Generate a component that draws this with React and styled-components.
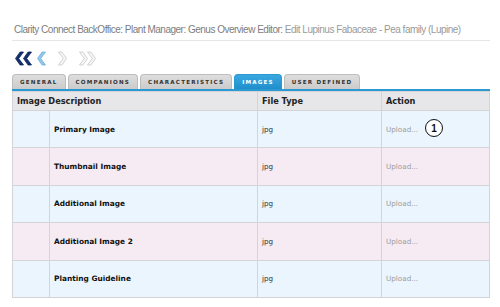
import React from "react";
import styled, { createGlobalStyle } from "styled-components";

const GlobalStyle = createGlobalStyle`
  body {
    margin: 0;
    background: #fff;
    font-family: "DejaVu Sans", Verdana, sans-serif;
  }
`;

const tabs = ["General", "Companions", "Characteristics", "Images", "User Defined"];

const rows = [
  { name: "Primary Image", type: "jpg", badge: 1 },
  { name: "Thumbnail Image", type: "jpg" },
  { name: "Additional Image", type: "jpg" },
  { name: "Additional Image 2", type: "jpg" },
  { name: "Planting Guideline", type: "jpg" },
];

function Chevron({ dir, fill, stroke, double }) {
  const left = "8,0.5 3.2,7 8,13.5 4.6,13.5 0,7 4.6,0.5";
  const right = "0,0.5 4.8,7 0,13.5 3.4,13.5 8,7 3.4,0.5";
  const pts = dir === "left" ? left : right;
  return (
    <svg width={double ? 18 : 9} height="15" viewBox={double ? "0 0 18 15" : "0 0 9 15"}>
      <polygon points={pts} fill={fill} stroke={stroke} strokeWidth="0.8" transform="translate(0.5,0.5)" />
      {double && (
        <polygon points={pts} fill={fill} stroke={stroke} strokeWidth="0.8" transform="translate(8.5,0.5)" />
      )}
    </svg>
  );
}

export default function App() {
  return (
    <>
      <GlobalStyle />
      <Page>
        <Title>
          <Dark>Clarity Connect BackOffice: Plant Manager: Genus Overview Editor:</Dark>{" "}
          <Light>Edit Lupinus Fabaceae - Pea family (Lupine)</Light>
        </Title>
        <Nav>
          <Chevron dir="left" double fill="#14306e" stroke="#0d2358" />
          <Chevron dir="left" fill="#8fc8ec" stroke="#6fb0dd" />
          <Gap />
          <Chevron dir="right" fill="#f6f6f6" stroke="#c8c8c8" />
          <Gap />
          <Chevron dir="right" double fill="#f6f6f6" stroke="#c8c8c8" />
        </Nav>
        <TabBar>
          {tabs.map((t) => (
            <Tab key={t} active={t === "Images"}>
              {t}
            </Tab>
          ))}
        </TabBar>
        <Table>
          <colgroup>
            <col style={{ width: 37 }} />
            <col style={{ width: 208 }} />
            <col style={{ width: 124 }} />
            <col />
          </colgroup>
          <thead>
            <tr>
              <Th colSpan={2}>Image Description</Th>
              <Th>File Type</Th>
              <Th>Action</Th>
            </tr>
          </thead>
          <tbody>
            {rows.map((r, i) => (
              <Row key={r.name} pink={i % 2 === 1}>
                <Cell />
                <NameCell>{r.name}</NameCell>
                <Cell>{r.type}</Cell>
                <ActionCell>
                  Upload...
                  {r.badge && <Badge>{r.badge}</Badge>}
                </ActionCell>
              </Row>
            ))}
          </tbody>
        </Table>
      </Page>
    </>
  );
}

const Page = styled.div`
  width: 478px;
  padding: 23px 0 0 12px;
`;

const Title = styled.div`
  font-family: "Liberation Sans", Arial, sans-serif;
  font-size: 10px;
  letter-spacing: -0.5px;
  padding: 0 0 3px 2px;
  border-bottom: 1px solid #e6e6e6;
  white-space: nowrap;
  line-height: 14px;
`;

const Dark = styled.span`
  color: #7d7d7d;
`;

const Light = styled.span`
  color: #9a9a9a;
`;

const Nav = styled.div`
  display: flex;
  align-items: center;
  gap: 4px;
  padding: 9px 0 0 3px;
  height: 16px;
`;

const Gap = styled.span`
  width: 4px;
`;

const TabBar = styled.div`
  display: flex;
  gap: 2px;
  margin-top: 8px;
  border-bottom: 2px solid #2b9ad3;
`;

const Tab = styled.div`
  height: 14px;
  padding: 0 7px;
  display: flex;
  align-items: center;
  border-radius: 4px 4px 0 0;
  border: 1px solid ${(p) => (p.active ? "#2b9ad3" : "#bdbdbd")};
  border-bottom: none;
  background: ${(p) =>
    p.active ? "linear-gradient(#3aa8e0, #1f8fcc)" : "linear-gradient(#dedede, #cbcbcb)"};
  color: ${(p) => (p.active ? "#fff" : "#333")};
  font-family: "DejaVu Sans", Verdana, sans-serif;
  font-weight: bold;
  font-size: 5.6px;
  letter-spacing: 1.2px;
  text-transform: uppercase;
`;

const Table = styled.table`
  width: 478px;
  border-collapse: collapse;
  table-layout: fixed;
  border: 1px solid #d4d4d8;
`;

const Th = styled.th`
  height: 18px;
  padding: 0 4px;
  text-align: left;
  background: #e7e6e8;
  border: 1px solid #d4d4d8;
  color: #222;
  font-size: 8.2px;
  font-weight: bold;
`;

const Row = styled.tr`
  background: ${(p) => (p.pink ? "#f6ebf3" : "#eaf5fd")};
`;

const Cell = styled.td`
  height: 36.4px;
  padding: 0 4px;
  border: 1px solid #d4d4d8;
  font-size: 7.2px;
  color: #333;
`;

const NameCell = styled(Cell)`
  font-weight: bold;
  color: #111;
  font-size: 7.4px;
`;

const ActionCell = styled(Cell)`
  color: #9c9c9c;
  position: relative;
`;

const Badge = styled.span`
  position: absolute;
  left: 43px;
  top: 8px;
  width: 16px;
  height: 16px;
  border: 1.5px solid #111;
  border-radius: 50%;
  background: #fff;
  display: flex;
  align-items: center;
  justify-content: center;
  color: #111;
  font-family: "Liberation Sans", Arial, sans-serif;
  font-weight: bold;
  font-size: 10px;
`;
